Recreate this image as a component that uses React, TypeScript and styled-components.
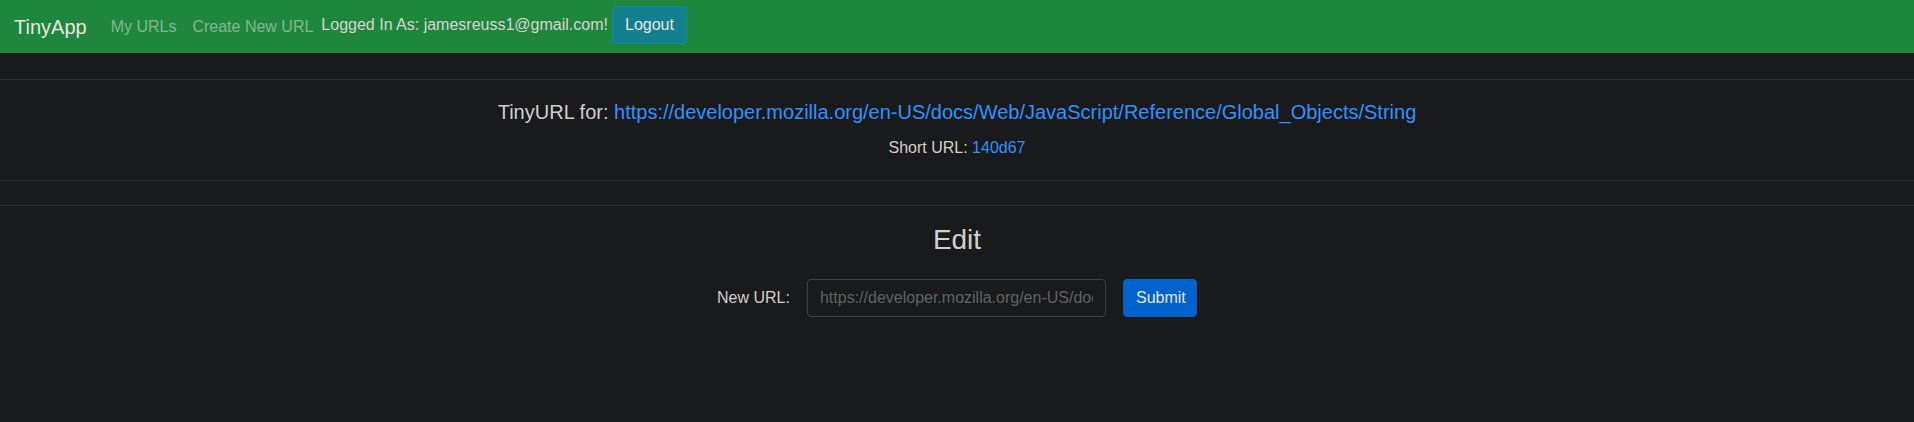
import React from "react";
import styled, { createGlobalStyle } from "styled-components";

const GlobalStyle = createGlobalStyle`
  html, body {
    margin: 0;
    padding: 0;
    background: #181a1b;
  }
  body {
    font-family: "Liberation Sans", Arial, sans-serif;
    font-size: 16px;
    line-height: 1.5;
    color: #d3cfc9;
  }
  * { box-sizing: border-box; }
`;

const Page = styled.div`
  min-height: 422px;
  background: #181a1b;
`;

const Nav = styled.nav`
  display: flex;
  align-items: center;
  height: 53px;
  padding: 0 16px 0 14px;
  background: #1f873d;
`;

const Brand = styled.a`
  font-size: 20px;
  line-height: 30px;
  color: #e8e6e3;
  text-decoration: none;
  margin-right: 16px;
`;

const NavLink = styled.a`
  padding: 0 8px;
  color: rgba(232, 230, 227, 0.5);
  text-decoration: none;
  line-height: 24px;
`;

const LoggedIn = styled.span`
  color: #d8d5d0;
  line-height: 24px;
  margin-top: -3px;
`;

const Button = styled.button<{ $variant: "info" | "primary" }>`
  font-family: "Liberation Sans", Arial, sans-serif;
  font-size: 16px;
  line-height: 24px;
  height: 38px;
  padding: 6px 12px;
  border-radius: 4px;
  color: #e8e6e3;
  cursor: pointer;
  background: ${(p) => (p.$variant === "info" ? "#13808f" : "#0062cc")};
  border: 1px solid ${(p) => (p.$variant === "info" ? "#168a9b" : "#0a5fbf")};
`;

const LogoutButton = styled(Button)`
  margin-left: 4px;
  margin-top: -3px;
  width: 75px;
`;

const Card = styled.section`
  text-align: center;
  border-bottom: 1px solid #2b2e30;
`;

const CardHeader = styled.div`
  height: 27px;
  border-bottom: 1px solid #2b2e30;
`;

const CardBody = styled.div`
  padding: 20px;
`;

const CardTitle = styled.h5`
  margin: 0 0 12px;
  font-size: 20px;
  font-weight: 400;
  line-height: 24px;
`;

const CardText = styled.p`
  margin: 0;
  font-size: 16px;
  line-height: 24px;
`;

const Link = styled.a`
  color: #3391ff;
  text-decoration: none;
`;

const CardFooter = styled.div`
  height: 25px;
  border-top: 1px solid #2b2e30;
`;

const EditSection = styled.section`
  padding-top: 17px;
  text-align: center;
`;

const Heading = styled.h3`
  margin: 0 0 22px;
  font-size: 28px;
  font-weight: 400;
  line-height: 34px;
`;

const Form = styled.form`
  display: flex;
  justify-content: center;
  align-items: center;
  gap: 17px;
`;

const Label = styled.label`
  font-size: 16px;
  line-height: 24px;
`;

const Input = styled.input`
  width: 299px;
  height: 38px;
  padding: 6px 12px;
  font-family: "Liberation Sans", Arial, sans-serif;
  font-size: 16px;
  line-height: 24px;
  color: #b2aca2;
  background: #181a1b;
  border: 1px solid #3c4143;
  border-radius: 4px;
  outline: none;
  &::placeholder {
    color: #5e6366;
    opacity: 1;
  }
`;

const SubmitButton = styled(Button)`
  width: 74px;
`;

export default function App() {
  const longUrl =
    "https://developer.mozilla.org/en-US/docs/Web/JavaScript/Reference/Global_Objects/String";
  return (
    <Page>
      <GlobalStyle />
      <Nav>
        <Brand href="#">TinyApp</Brand>
        <NavLink href="#">My URLs</NavLink>
        <NavLink href="#">Create New URL</NavLink>
        <LoggedIn>Logged In As: jamesreuss1@gmail.com!</LoggedIn>
        <LogoutButton $variant="info" type="button">
          Logout
        </LogoutButton>
      </Nav>
      <Card>
        <CardHeader />
        <CardBody>
          <CardTitle>
            TinyURL for: <Link href="#">{longUrl}</Link>
          </CardTitle>
          <CardText>
            Short URL: <Link href="#">140d67</Link>
          </CardText>
        </CardBody>
        <CardFooter />
      </Card>
      <EditSection>
        <Heading>Edit</Heading>
        <Form onSubmit={(e) => e.preventDefault()}>
          <Label htmlFor="newurl">New URL:</Label>
          <Input id="newurl" type="text" placeholder={longUrl} />
          <SubmitButton $variant="primary" type="submit">
            Submit
          </SubmitButton>
        </Form>
      </EditSection>
    </Page>
  );
}
